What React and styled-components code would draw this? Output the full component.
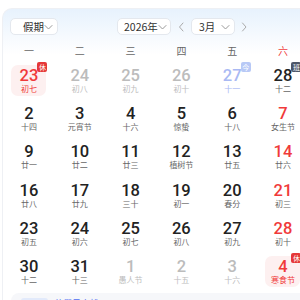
import React from "react";
import styled, { createGlobalStyle } from "styled-components";

const Global = createGlobalStyle`
  html, body { margin: 0; padding: 0; background: #fff; overflow: hidden; }
  body { font-family: Roboto, "Noto Sans CJK SC", sans-serif; }
`;

const Card = styled.div`
  margin: 8px 0 0 2px;
  width: 360px;
  border: 1px solid #eef0f4;
  border-right: none;
  border-radius: 10px 0 0 0;
  background: linear-gradient(180deg, #e7f2fd 0, #f6fafe 28px, #fff 46px);
`;

const Toolbar = styled.div`
  display: flex;
  align-items: center;
  padding: 9px 0 0 7px;
  height: 17px;
`;

const Right = styled.div`
  display: flex;
  align-items: center;
  margin-left: 59px;
`;

const Select = styled.div`
  box-sizing: border-box;
  flex: none;
  width: ${(p) => p.$w}px;
  height: 17px;
  display: flex;
  align-items: center;
  justify-content: space-between;
  padding: 0 4px 0 ${(p) => p.$pl}px;
  background: #fff;
  border: 1px solid #e4e8ee;
  border-radius: 5px;
  font-family: "Noto Sans CJK SC", sans-serif;
  font-size: 10.5px;
  color: #333;
  white-space: nowrap;

  svg { flex: none; }
`;

const Arrow = styled.span`
  display: flex;
  width: ${(p) => p.$w}px;
  justify-content: center;
`;

const Week = styled.div`
  display: grid;
  grid-template-columns: repeat(7, 50.8px);
  padding-left: 0.6px;
  margin-top: 5px;
  height: 21px;
  align-items: center;
`;

const WeekDay = styled.div`
  text-align: center;
  font-family: "Noto Sans CJK SC", sans-serif;
  font-size: 10px;
  color: ${(p) => (p.$red ? "#f04040" : "#666")};
`;

const Grid = styled.div`
  display: grid;
  grid-template-columns: repeat(7, 50.8px);
  grid-auto-rows: 38.2px;
  padding-left: 0.6px;
`;

const Cell = styled.div`
  display: flex;
  justify-content: center;
  padding-top: 4px;
`;

const DayBox = styled.div`
  position: relative;
  width: 35px;
  height: 31px;
  box-sizing: border-box;
  padding-top: 3px;
  border-radius: 7px;
  background: ${(p) => (p.$hl ? "#fdf0f0" : "transparent")};
  display: flex;
  flex-direction: column;
  align-items: center;
`;

const colors = {
  normal: ["#222", "#666"],
  dim: ["#bcbcbc", "#bdbdbd"],
  red: ["#f03a3a", "#666"],
  hol: ["#f03a3a", "#f03a3a"],
  blue: ["#a9b9f3", "#a9b9f3"],
};

const Num = styled.div`
  font-family: Roboto, sans-serif;
  font-size: 16.5px;
  font-weight: 500;
  line-height: 16px;
  color: ${(p) => colors[p.$t][0]};
`;

const Lunar = styled.div`
  font-family: "Noto Sans CJK SC", sans-serif;
  font-size: 8px;
  line-height: 10px;
  white-space: nowrap;
  color: ${(p) => colors[p.$t][1]};
`;

const badgeBg = { rest: "#e53838", work: "#4d5668", light: "#b8c9f6" };

const Badge = styled.span`
  position: absolute;
  top: -3px;
  right: -1px;
  width: 10px;
  height: 10px;
  border-radius: 2px;
  background: ${(p) => badgeBg[p.$k]};
  color: #fff;
  font-family: "Noto Sans CJK SC", sans-serif;
  font-size: 7px;
  line-height: 10px;
  text-align: center;
`;

const Footer = styled.div`
  margin: 3px 0 0 8px;
  height: 30px;
  border-radius: 8px 0 0 0;
  background: #f6f7fa;
  display: flex;
  align-items: flex-start;
  gap: 6px;
  padding: 5px 0 0 10px;
`;

const Pill = styled.span`
  width: 27px;
  height: 12px;
  border-radius: 3px;
  background: #e2eafb;
`;

const FooterText = styled.span`
  font-family: "Noto Sans CJK SC", sans-serif;
  font-size: 9px;
  color: #4e6ef2;
  line-height: 12px;
`;

const Chevron = ({ dir = "down", color = "#999" }) => {
  const d = dir === "down" ? "M1 2.5 L4.5 6 L8 2.5" : dir === "left" ? "M5 1 L1.5 5 L5 9" : "M1.5 1 L5 5 L1.5 9";
  const w = dir === "down" ? 9 : 7;
  const h = dir === "down" ? 8 : 10;
  return (
    <svg width={w} height={h} viewBox={`0 0 ${w} ${h}`}>
      <path d={d} fill="none" stroke={color} strokeWidth="1" strokeLinecap="round" />
    </svg>
  );
};

const weekdays = ["一", "二", "三", "四", "五", "六", "日"];

const days = [
  [23, "初七", "hol", "rest", true], [24, "初八", "dim"], [25, "初九", "dim"], [26, "初十", "dim"], [27, "十一", "blue", "light"], [28, "十二", "normal", "work"], [1, "十三", "red"],
  [2, "十四", "normal"], [3, "元宵节", "normal"], [4, "十六", "normal"], [5, "惊蛰", "normal"], [6, "十八", "normal"], [7, "女生节", "red"], [8, "妇女节", "red"],
  [9, "廿一", "normal"], [10, "廿二", "normal"], [11, "廿三", "normal"], [12, "植树节", "normal"], [13, "廿五", "normal"], [14, "廿六", "red"], [15, "廿七", "red"],
  [16, "廿八", "normal"], [17, "廿九", "normal"], [18, "三十", "normal"], [19, "初一", "normal"], [20, "春分", "normal"], [21, "初三", "red"], [22, "初四", "red"],
  [23, "初五", "normal"], [24, "初六", "normal"], [25, "初七", "normal"], [26, "初八", "normal"], [27, "初九", "normal"], [28, "初十", "red"], [29, "十一", "red"],
  [30, "十二", "normal"], [31, "十三", "normal"], [1, "愚人节", "dim"], [2, "十五", "dim"], [3, "十六", "dim"], [4, "寒食节", "hol", "rest", true], [5, "清明", "hol", "rest", true],
];

const badgeText = { rest: "休", work: "班", light: "今" };

export default function App() {
  return (
    <>
      <Global />
      <Card>
        <Toolbar>
          <Select $w={48} $pl={12}>
            <span>假期</span>
            <Chevron />
          </Select>
          <Right>
            <Select $w={54} $pl={6}>
              <span>2026年</span>
              <Chevron />
            </Select>
            <Arrow $w={20}>
              <Chevron dir="left" color="#aaa" />
            </Arrow>
            <Select $w={44} $pl={7}>
              <span>3月</span>
              <Chevron />
            </Select>
            <Arrow $w={18}>
              <Chevron dir="right" color="#aaa" />
            </Arrow>
          </Right>
        </Toolbar>
        <Week>
          {weekdays.map((w, i) => (
            <WeekDay key={w} $red={i >= 5}>
              {w}
            </WeekDay>
          ))}
        </Week>
        <Grid>
          {days.map(([n, l, t, b, hl], i) => (
            <Cell key={i}>
              <DayBox $hl={hl}>
                <Num $t={t}>{n}</Num>
                <Lunar $t={t}>{l}</Lunar>
                {b && <Badge $k={b}>{badgeText[b]}</Badge>}
              </DayBox>
            </Cell>
          ))}
        </Grid>
        <Footer>
          <Pill />
          <FooterText>节假日安排</FooterText>
        </Footer>
      </Card>
    </>
  );
}
